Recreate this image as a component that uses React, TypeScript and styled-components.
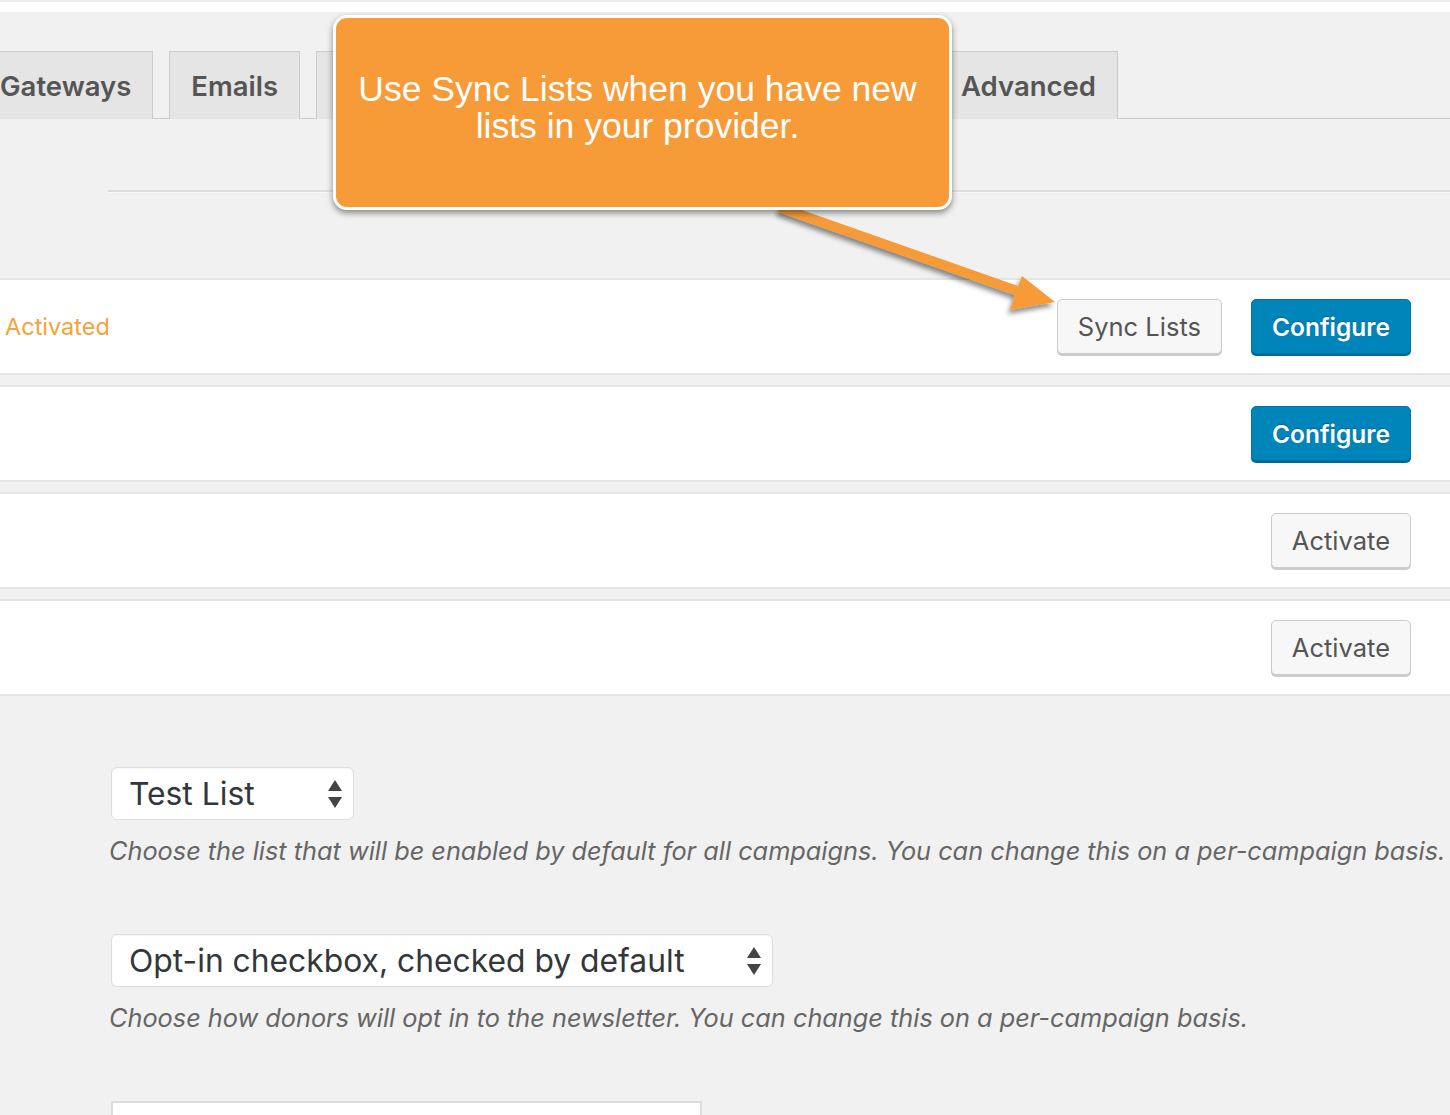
import React from "react";
import styled, { createGlobalStyle } from "styled-components";

const GlobalStyle = createGlobalStyle`
  html, body { margin: 0; padding: 0; }
  body {
    background: #f1f1f1;
    font-family: Inter, "Noto Sans", sans-serif;
    overflow: hidden;
    width: 1450px;
    height: 1115px;
  }
`;

const Page = styled.div`
  position: relative;
  width: 1450px;
  height: 1115px;
  overflow: hidden;
  background: #f1f1f1;
`;

const TopStrip = styled.div`
  height: 10px;
  border-top: 2px solid #ececec;
  background: #ffffff;
`;

const TabBar = styled.nav`
  display: flex;
  align-items: flex-end;
  gap: 16px;
  margin-top: 38px;
  margin-left: -22px;
  border-bottom: 1px solid #cccccc;
  height: 68px;
`;

const Tab = styled.div<{ $w?: number }>`
  box-sizing: border-box;
  height: 68px;
  ${(p) => (p.$w ? `width: ${p.$w}px;` : "")}
  padding: 0 21px;
  display: flex;
  align-items: center;
  background: #e5e5e5;
  border: 1px solid #cccccc;
  border-bottom: none;
  color: #555555;
  font-size: 27.5px;
  font-weight: 600;
  margin-bottom: -1px;
`;

const Divider = styled.div`
  margin: 71px 0 0 108px;
  height: 2px;
  background: #dddddd;
  border-bottom: 1px solid #f9f9f9;
`;

const RowList = styled.div`
  margin-top: 85px;
  display: flex;
  flex-direction: column;
  gap: 10px;
`;

const Row = styled.div`
  box-sizing: border-box;
  height: 97px;
  background: #ffffff;
  border-top: 2px solid #e5e5e5;
  border-bottom: 2px solid #e5e5e5;
  display: flex;
  align-items: center;
  padding: 0 39px 0 5px;
`;

const Status = styled.span`
  color: #f7a13b;
  font-size: 23.5px;
  font-weight: 400;
`;

const Actions = styled.div`
  margin-left: auto;
  display: flex;
  gap: 29px;
  align-items: center;
`;

const Button = styled.button<{ $primary?: boolean }>`
  box-sizing: border-box;
  height: 55px;
  padding: 0 20px;
  border-radius: 5px;
  font-family: Inter, "Noto Sans", sans-serif;
  cursor: pointer;
  ${(p) =>
    p.$primary
      ? `
    font-size: 24.5px;
    background: #0085ba;
    border: 1px solid #0073aa;
    box-shadow: 0 2px 0 #006799;
    color: #ffffff;
    font-weight: 600;
    text-shadow: 0 -1px 1px #006799;
  `
      : `
    font-size: 25.5px;
    background: #f7f7f7;
    border: 1px solid #cccccc;
    box-shadow: 0 2px 0 #cccccc;
    color: #555555;
    font-weight: 400;
  `}
`;

const Form = styled.div`
  padding: 71px 0 0 111px;
  display: flex;
  flex-direction: column;
`;

const Field = styled.div`
  display: flex;
  flex-direction: column;
  align-items: flex-start;
  margin-bottom: 68px;
`;

const Select = styled.div<{ $w: number }>`
  box-sizing: border-box;
  width: ${(p) => p.$w}px;
  height: 53px;
  background: #ffffff;
  border: 1px solid #dddddd;
  border-radius: 6px;
  box-shadow: inset 0 1px 2px rgba(0, 0, 0, 0.04);
  display: flex;
  align-items: center;
  padding: 0 10px 0 17px;
  font-size: 31.8px;
  color: #32373c;
`;

const SelectLabel = styled.span`
  flex: 1;
`;

const Description = styled.p`
  margin: 15px 0 0 -2px;
  font-size: 25.3px;
  font-style: italic;
  color: #666666;
  white-space: nowrap;
`;

const Input = styled.div`
  box-sizing: border-box;
  width: 591px;
  height: 40px;
  background: #ffffff;
  border: 2px solid #dddddd;
`;

const Callout = styled.div`
  position: absolute;
  left: 333px;
  top: 15px;
  width: 619px;
  height: 195px;
  box-sizing: border-box;
  background: #f79a38;
  border: 3px solid #ffffff;
  border-radius: 14px;
  box-shadow: 0 3px 6px rgba(0, 0, 0, 0.45);
  color: #ffffff;
  font-family: "Liberation Sans", Arial, sans-serif;
  font-size: 35.5px;
  line-height: 37px;
  text-align: center;
  padding: 53px 20px 0 10px;
`;

const ArrowLayer = styled.svg`
  position: absolute;
  left: 0;
  top: 0;
  pointer-events: none;
`;

function SelectArrows() {
  return (
    <svg width="16" height="30" viewBox="0 0 16 30">
      <path d="M8 1 L15 12 L1 12 Z" fill="#444" />
      <path d="M8 29 L15 18 L1 18 Z" fill="#444" />
    </svg>
  );
}

export default function App() {
  return (
    <>
      <GlobalStyle />
      <Page>
        <TopStrip />
        <TabBar>
          <Tab>Gateways</Tab>
          <Tab>Emails</Tab>
          <Tab $w={296} aria-label="Extensions" />
          <Tab $w={295} aria-label="Licenses" />
          <Tab>Advanced</Tab>
        </TabBar>
        <Divider />
        <RowList>
          <Row>
            <Status>Activated</Status>
            <Actions>
              <Button>Sync Lists</Button>
              <Button $primary>Configure</Button>
            </Actions>
          </Row>
          <Row>
            <Actions>
              <Button $primary>Configure</Button>
            </Actions>
          </Row>
          <Row>
            <Actions>
              <Button>Activate</Button>
            </Actions>
          </Row>
          <Row>
            <Actions>
              <Button>Activate</Button>
            </Actions>
          </Row>
        </RowList>
        <Form>
          <Field>
            <Select $w={243}>
              <SelectLabel>Test List</SelectLabel>
              <SelectArrows />
            </Select>
            <Description>
              Choose the list that will be enabled by default for all campaigns. You can change this on a per-campaign basis.
            </Description>
          </Field>
          <Field>
            <Select $w={662}>
              <SelectLabel>Opt-in checkbox, checked by default</SelectLabel>
              <SelectArrows />
            </Select>
            <Description>
              Choose how donors will opt in to the newsletter. You can change this on a per-campaign basis.
            </Description>
          </Field>
          <Input />
        </Form>

        <ArrowLayer width="1450" height="1115" viewBox="0 0 1450 1115">
          <defs>
            <filter id="sh" x="-20%" y="-20%" width="140%" height="160%">
              <feDropShadow dx="-2" dy="4" stdDeviation="2.5" floodColor="#000" floodOpacity="0.45" />
            </filter>
          </defs>
          <path
            d="M782 203 L1018 286 L1022 276 L1055 302 L1010 310 L1015 295 L778 212 Z"
            fill="#f79a38"
            filter="url(#sh)"
          />
        </ArrowLayer>
        <Callout>
          Use Sync Lists when you have new
          <br />
          lists in your provider.
        </Callout>
      </Page>
    </>
  );
}
